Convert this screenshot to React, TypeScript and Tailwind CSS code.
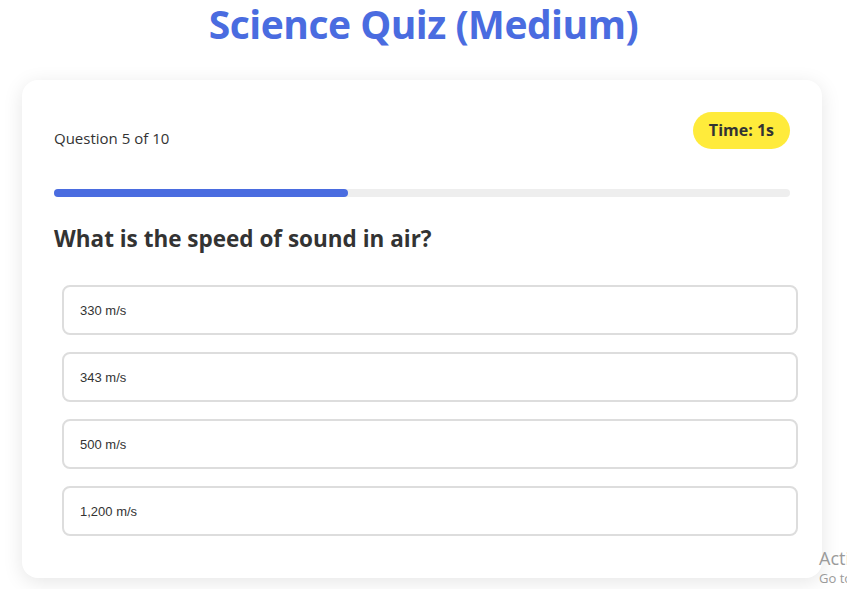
import React from "react";

const OPTIONS = ["330 m/s", "343 m/s", "500 m/s", "1,200 m/s"];

export default function App() {
  const current = 5;
  const total = 10;
  const progress = ((current - 1) / total) * 100;

  return (
    <div className="relative min-h-screen bg-white overflow-hidden font-['Open_Sans',sans-serif]">
      <h1 className="pt-[2px] text-center text-[39px] leading-[44px] font-bold text-[#4a6ce0] tracking-[-0.5px]">
        Science Quiz (Medium)
      </h1>

      <div className="mt-[34px] ml-[22px] w-[800px] rounded-2xl bg-white px-8 pt-8 pb-[42px] shadow-[0_4px_20px_rgba(0,0,0,0.1)]">
        {/* Header */}
        <div className="flex items-end justify-between">
          <p className="pb-[1px] text-[15px] leading-[20px] text-[#333]">
            Question {current} of {total}
          </p>
          <span className="rounded-full bg-[#ffeb3b] px-4 py-2 text-[16px] leading-[21px] font-bold text-[#333]">
            Time: 1s
          </span>
        </div>

        {/* Progress */}
        <div className="mt-10 h-2 w-full rounded-full bg-[#eeeeee]">
          <div className="h-full rounded-full bg-[#4a6ce0]" style={{ width: `${progress}%` }} />
        </div>

        {/* Question */}
        <h2 className="mt-[28px] text-[22.5px] leading-[28px] font-bold text-[#333]">
          What is the speed of sound in air?
        </h2>

        <div className="mt-[32px] ml-2 flex w-full flex-col gap-[17px]">
          {OPTIONS.map((opt) => (
            <button
              key={opt}
              className="w-full rounded-lg border-2 border-[#dddddd] bg-white px-4 pt-[16px] pb-[14px] text-left text-[13px] leading-[16px] text-[#333] font-['Liberation_Sans',Arial,sans-serif]"
            >
              {opt}
            </button>
          ))}
        </div>
      </div>

      {/* Windows watermark */}
      <div className="absolute left-[819px] top-[547px] whitespace-nowrap text-[#9a9a9a] font-['Open_Sans',sans-serif]">
        <div className="text-[18px] leading-[22px]">Activate Windows</div>
        <div className="text-[13px] leading-[18px]">Go to Settings to activate Windows.</div>
      </div>
    </div>
  );
}
